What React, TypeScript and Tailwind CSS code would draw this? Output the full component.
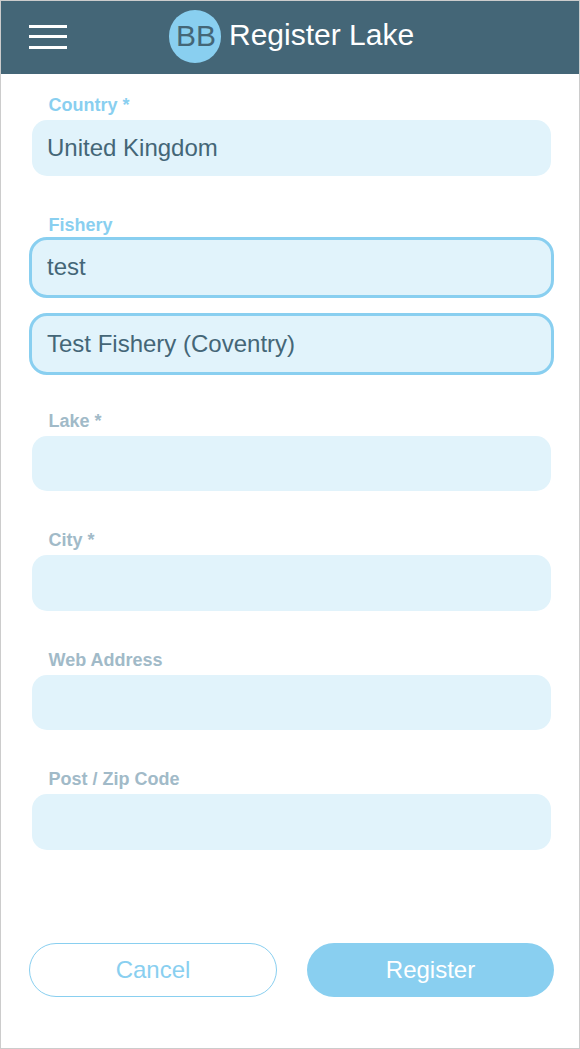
type FieldProps = {
  id: string;
  label: string;
  value?: string;
  active?: boolean;
  focused?: boolean;
  className?: string;
  boxClass: string;
};

function Field({ id, label, value = "", active, focused, className = "", boxClass }: FieldProps) {
  return (
    <div className={`flex flex-col ${className}`}>
      <label
        htmlFor={id}
        className={`h-[25px] pl-[19.5px] text-[18px] leading-5 font-bold ${active ? "text-[#89cff0]" : "text-[#a1bac8]"}`}
      >
        {label}
      </label>
      <input
        id={id}
        type="text"
        defaultValue={value}
        className={`text-2xl text-[#446677] bg-[#e1f3fb] outline-none ${
          focused
            ? "-mt-[3px] rounded-[18px] border-[3px] border-[#89cff0] px-[15px] pb-[2px]"
            : "mx-[3px] rounded-[15px] px-[15px]"
        } ${boxClass}`}
      />
    </div>
  );
}

export default function App() {
  return (
    <div className="flex h-[1049px] w-full flex-col border border-[#cccccc] bg-white font-['Liberation_Sans',Arial,sans-serif]">
      <header className="flex h-[73px] shrink-0 items-start bg-[#446677] pl-7">
        <button type="button" aria-label="Menu" className="mt-6 flex w-[38px] flex-col">
          <span className="h-[3px] bg-white" />
          <span className="mt-[7px] h-[3px] bg-white" />
          <span className="mt-2 h-[3px] bg-white" />
        </button>
        <div className="mt-[9px] ml-[102px] flex h-[53px] w-[52px] justify-center rounded-full bg-[#89cff0] pl-[2px] text-[30px] leading-[51px] text-[#446677]">
          BB
        </div>
        <h1 className="mt-[9px] ml-2 text-[30px] leading-[49px] whitespace-nowrap text-white">Register Lake</h1>
      </header>

      <form className="flex flex-col pr-[25px] pl-7">
        <Field id="country" label="Country *" value="United Kingdom" active className="mt-[21px]" boxClass="h-14" />
        <Field id="fishery" label="Fishery" value="test" active focused className="mt-[39px]" boxClass="h-[61px]" />
        <button
          type="button"
          className="mt-[15px] h-[62px] rounded-[18px] border-[3px] border-[#89cff0] bg-[#e1f3fb] px-[15px] text-left text-2xl text-[#446677]"
        >
          Test Fishery (Coventry)
        </button>
        <Field id="lake" label="Lake *" className="mt-9" boxClass="h-[55px]" />
        <Field id="city" label="City *" className="mt-[39px]" boxClass="h-14" />
        <Field id="web" label="Web Address" className="mt-[39px]" boxClass="h-[55px]" />
        <Field id="post" label="Post / Zip Code" className="mt-[39px]" boxClass="h-14" />

        <div className="mt-[93px] flex h-[54px] gap-[30px]">
          <button type="button" className="w-[248px] rounded-full border border-[#89cff0] text-2xl text-[#89cff0]">
            Cancel
          </button>
          <button type="button" className="flex-1 rounded-full bg-[#89cff0] text-2xl text-white">
            Register
          </button>
        </div>
      </form>
    </div>
  );
}
